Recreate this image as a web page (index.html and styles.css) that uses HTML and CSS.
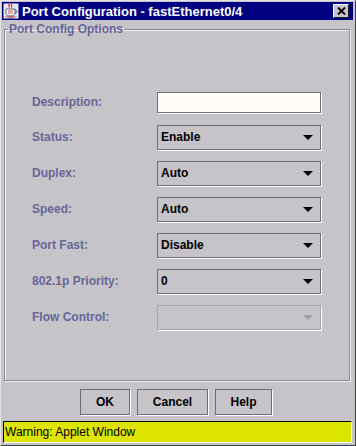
FILE: index.html
```html
<!DOCTYPE html>
<html lang="en">
<head>
    <meta charset="UTF-8">
    <title>Port Configuration - fastEthernet0/4</title>
    <link rel="stylesheet" href="styles.css">
</head>
<body>
    <div class="window">
        <div class="titlebar">
            <svg class="app-icon" width="16" height="16" viewBox="0 0 16 16">
                <rect x="0.5" y="0.5" width="15" height="15" fill="#e8e8f0"/>
                <path d="M6 1 C5 2.5 7 3 6 4.5 M8.5 1 C7.5 2.5 9.5 3 8.5 4.5" stroke="#d02020" stroke-width="1.2" fill="none"/>
                <path d="M3 6 H12 V10 C12 12 10.5 13 7.5 13 C4.5 13 3 12 3 10 Z" fill="#fff" stroke="#505060" stroke-width="0.9"/>
                <path d="M12 7 C14.5 7 14.5 10 12 10" stroke="#505060" stroke-width="1" fill="none"/>
                <path d="M1.5 13.5 H14 C13 15 2.5 15 1.5 13.5 Z" fill="#b03030"/>
                <path d="M5 8 H10 M5 10 H10" stroke="#c02828" stroke-width="0.8"/>
            </svg>
            <span class="title">Port Configuration - fastEthernet0/4</span>
            <div class="close">
                <svg width="9" height="8" viewBox="0 0 9 8">
                    <path d="M1 0.5 L8 7.5 M8 0.5 L1 7.5" stroke="#000" stroke-width="1.8"/>
                </svg>
            </div>
        </div>

        <fieldset class="group">
            <legend>Port Config Options</legend>
            <div class="form">
                <div class="row first">
                    <span class="label">Description:</span>
                    <div class="textbox"></div>
                </div>
                <div class="row">
                    <span class="label">Status:</span>
                    <div class="combo">Enable<span class="arrow"></span></div>
                </div>
                <div class="row">
                    <span class="label">Duplex:</span>
                    <div class="combo">Auto<span class="arrow"></span></div>
                </div>
                <div class="row">
                    <span class="label">Speed:</span>
                    <div class="combo">Auto<span class="arrow"></span></div>
                </div>
                <div class="row">
                    <span class="label">Port Fast:</span>
                    <div class="combo">Disable<span class="arrow"></span></div>
                </div>
                <div class="row">
                    <span class="label">802.1p Priority:</span>
                    <div class="combo">0<span class="arrow"></span></div>
                </div>
                <div class="row">
                    <span class="label">Flow Control:</span>
                    <div class="combo disabled"><span class="arrow"></span></div>
                </div>
            </div>
        </fieldset>

        <div class="buttons">
            <div class="btn ok">OK</div>
            <div class="btn cancel">Cancel</div>
            <div class="btn help">Help</div>
        </div>

        <div class="warning">Warning: Applet Window</div>
    </div>
</body>
</html>
```

FILE: styles.css
```css
/* Window frame */
body {
    margin: 0;
    padding: 0;
    background: #c6c4c9;
    font-family: 'Liberation Sans', Arial, sans-serif;
}
.window {
    width: 356px;
    height: 446px;
    box-sizing: border-box;
    background: #c6c4c9;
    border: 1px solid;
    border-color: #e4e4e4 #404040 #404040 #e4e4e4;
    padding: 1px 2px 0 1px;
}

/* Title bar */
.titlebar {
    height: 18px;
    background: #000080;
    display: flex;
    align-items: center;
    padding: 0 2px 0 1px;
}
.app-icon {
    flex: none;
}
.title {
    color: #fff;
    font-weight: bold;
    font-size: 13px;
    margin-left: 3px;
    flex: 1;
    white-space: nowrap;
}
.close {
    width: 16px;
    height: 14px;
    box-sizing: border-box;
    background: #c6c4c9;
    border: 1px solid;
    border-color: #fff #202020 #202020 #fff;
    display: flex;
    align-items: center;
    justify-content: center;
    margin-right: 2px;
}

/* Group box */
.group {
    margin: 2px 3px 0 2px;
    padding: 49px 0 0 0;
    height: 359px;
    box-sizing: border-box;
    border: 1px solid #8a8a94;
    box-shadow: 1px 1px 0 #f0f0f0, inset 1px 1px 0 #f0f0f0;
}
.group legend {
    color: #666699;
    font-size: 12px;
    font-weight: bold;
    line-height: 14px;
    padding: 0 1px;
    margin-left: 3px;
}
.form {
    padding-left: 27px;
}
.row {
    display: grid;
    grid-template-columns: 125px 164px;
    height: 36px;
    align-items: center;
}
.row.first {
    height: 34px;
}
.label {
    color: #666699;
    font-size: 12px;
    font-weight: bold;
}
.textbox {
    height: 21px;
    box-sizing: border-box;
    background: #fffcf8;
    border: 1px solid #6e6e78;
    box-shadow: 1px 1px 0 #fff;
}
.combo {
    position: relative;
    height: 25px;
    box-sizing: border-box;
    border: 1px solid #6e6e78;
    box-shadow: 1px 1px 0 #fff;
    font-size: 12px;
    font-weight: bold;
    color: #000;
    padding-left: 3px;
    display: flex;
    align-items: center;
}
.combo .arrow {
    position: absolute;
    right: 7px;
    top: 9px;
    width: 0;
    height: 0;
    border-left: 5px solid transparent;
    border-right: 5px solid transparent;
    border-top: 5px solid #000;
}
.combo.disabled {
    border-color: #a4a4ac;
}
.combo.disabled .arrow {
    border-top-color: #a0a0a8;
}

/* Buttons */
.buttons {
    display: flex;
    justify-content: center;
    gap: 7px;
    margin-top: 8px;
    padding-right: 3px;
}
.btn {
    height: 26px;
    box-sizing: border-box;
    border: 1px solid #6e6e78;
    box-shadow: 1px 1px 0 #fff;
    font-size: 12px;
    font-weight: bold;
    display: flex;
    align-items: center;
    justify-content: center;
}
.btn.ok { width: 50px; }
.btn.cancel { width: 71px; }
.btn.help { width: 57px; }

/* Applet warning */
.warning {
    margin: 6px 1px 0 1px;
    height: 22px;
    box-sizing: border-box;
    background: #dde400;
    border: 1px solid;
    border-color: #000 #fff #fff #000;
    font-size: 12px;
    color: #000;
    padding-left: 1px;
    display: flex;
    align-items: center;
}
```
